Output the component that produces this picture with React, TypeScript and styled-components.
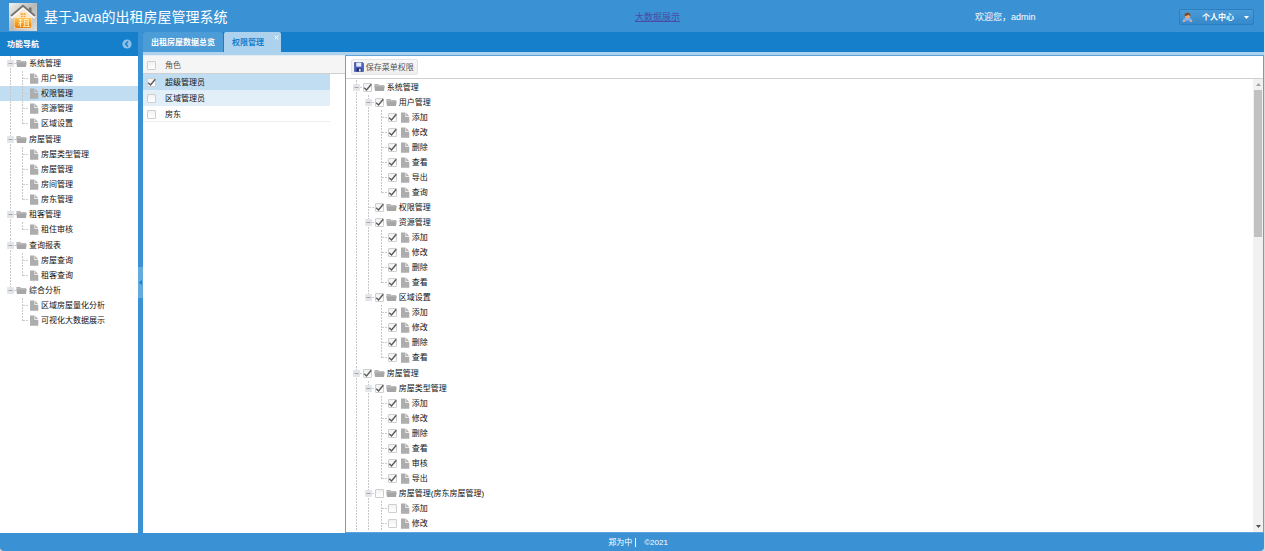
import React from 'react';
import styled, { createGlobalStyle, css } from 'styled-components';

const GlobalStyle = createGlobalStyle`
  * { box-sizing: border-box; }
  html, body { margin: 0; background: #ddd9d6; }
  body, button, input, table {
    font-family: "Liberation Sans", "Noto Sans CJK SC", sans-serif;
    font-size: 8px;
    line-height: 15px;
    color: #111;
  }
  a { color: inherit; text-decoration: none; }
`;

const Viewport = styled.div`
  display: flex;
  flex-direction: column;
  height: 100vh;
  margin-right: 1px;
  background: #3a92d4;
  border-radius: 0 0 4px 4px;
  overflow: hidden;
`;

const Header = styled.header`
  display: grid;
  grid-template-columns: 635fr 340fr 204fr auto;
  align-items: center;
  flex: 0 0 32px;
  padding: 2px 10px 0 0;
  color: #fff;
`;

const Brand = styled.div`
  display: flex;
  align-items: center;
  gap: 7px;
  padding-left: 9px;
  svg { flex: none; }
`;

const Title = styled.h1`
  margin: 0;
  font-size: 14px;
  font-weight: 400;
  line-height: 28px;
  white-space: nowrap;
`;

const BigDataLink = styled.a`
  font-size: 9px;
  color: #4a4aa8;
  text-decoration: underline;
`;

const Welcome = styled.span`
  font-size: 9px;
`;

const UserButton = styled.button`
  display: flex;
  align-items: center;
  width: 75px;
  height: 16px;
  padding: 0 4px 0 2px;
  border: 1px solid #2a7fc2;
  border-radius: 2px;
  background: linear-gradient(#4a9bd8, #3589ca);
  color: #fff;
  font-weight: 700;
  span { flex: 1; text-align: left; padding-left: 9px; }
`;

const Main = styled.div`
  display: flex;
  flex: 1;
  min-height: 0;
`;

const Sidebar = styled.aside`
  flex: 0 0 138px;
  display: flex;
  flex-direction: column;
  background: #fff;
`;

const SidebarHeader = styled.div`
  display: flex;
  align-items: center;
  justify-content: space-between;
  flex: 0 0 24px;
  padding: 0 6px 0 7px;
  background: #157fcc;
  color: #fff;
`;

const SidebarTitle = styled.h2`
  margin: 0;
  font-size: 8px;
`;

const BareButton = styled.button`
  display: grid;
  place-items: center;
  padding: 0;
  border: 0;
  background: none;
`;

const Splitter = styled.div`
  display: flex;
  align-items: center;
  flex: 0 0 5px;
`;

const SplitHandle = styled(BareButton)`
  width: 5px;
  height: 31px;
  background: #64abdf;
`;

const Workspace = styled.main`
  flex: 1;
  min-width: 0;
  display: flex;
  flex-direction: column;
  background: #157fcc;
`;

const TabStrip = styled.div`
  display: flex;
  gap: 1px;
  flex: 0 0 23px;
  border-bottom: 3px solid #add2ed;
`;

const Tab = styled.button<{ $active?: boolean }>`
  position: relative;
  padding: 0 ${p => (p.$active ? 17 : 8)}px 0 8px;
  border: 0;
  border-radius: 2px 2px 0 0;
  background: ${p => (p.$active ? '#add2ed' : '#4b9cd7')};
  color: ${p => (p.$active ? '#157fcc' : '#fff')};
  font-weight: 700;
`;

const TabClose = styled.span`
  position: absolute;
  top: 3px;
  right: 2px;
  display: flex;
`;

const Content = styled.div`
  display: flex;
  flex: 1;
  min-height: 0;
  background: #fff;
`;

const RolePane = styled.section`
  flex: 0 0 18%;
  border-top: 1px solid #e4edf4;
  background: linear-gradient(#f5f5f5 17px, #d0d0d0 17px, #d0d0d0 18px, #fff 18px);
`;

const RoleTable = styled.table`
  width: 187px;
  border-collapse: collapse;
  th, td {
    height: 16px;
    padding: 0;
    line-height: 15px;
    text-align: left;
    font-weight: 400;
    vertical-align: middle;
  }
  thead th { height: 18px; color: #555; }
  th:first-child, td:first-child { width: 22px; padding-left: 3px; }
`;

const RoleRow = styled.tr<{ $tone?: string }>`
  background: ${p => p.$tone ?? '#fff'};
  box-shadow: inset 0 -1px ${p => p.$tone ?? '#ededed'};
`;

const PermissionPane = styled.section`
  flex: 1;
  min-width: 0;
  display: flex;
  flex-direction: column;
  border: 1px solid #5fa2dd;
`;

const Toolbar = styled.div`
  display: flex;
  align-items: center;
  flex: 0 0 23px;
  padding: 0 5px;
  border-bottom: 1px solid #d0d0d0;
`;

const SaveButton = styled.button`
  display: flex;
  align-items: center;
  gap: 2px;
  height: 16px;
  padding: 0 3px 0 2px;
  border: 1px solid #e4e4e4;
  border-radius: 2px;
  background: linear-gradient(#f7f7f7, #efefef);
  color: #555;
`;

const ScrollArea = styled.div`
  display: flex;
  flex: 1;
  min-height: 0;
`;

const ScrollBody = styled.div`
  flex: 1;
  min-width: 0;
  padding-top: 1px;
  overflow: hidden;
`;

const ScrollTrack = styled.div`
  display: flex;
  flex-direction: column;
  flex: 0 0 10px;
  background: #f1f1f1;
`;

const ScrollArrow = styled(BareButton)`
  flex: 0 0 11px;
  width: 10px;
`;

const ScrollRun = styled.div`
  flex: 1;
  padding: 0 1px;
`;

const ScrollThumb = styled.div`
  height: 34%;
  background: #c1c1c1;
`;

const TreeList = styled.ul<{ $root?: boolean }>`
  margin: 0;
  padding: 0;
  list-style: none;
  ${p => p.$root && css`
    & > li:nth-child(even) { margin-top: 1px; }
  `}
`;

const rowStyle = css`
  display: flex;
  height: 15px;
  padding-left: 4px;
  white-space: nowrap;
`;

const NavRow = styled.a<{ $selected?: boolean }>`
  ${rowStyle}
  background: ${p => (p.$selected ? '#c1ddf1' : 'transparent')};
`;

const CheckRow = styled.label`
  ${rowStyle}
`;

const Cell = styled.span<{ $width: number }>`
  display: flex;
  align-items: center;
  flex: 0 0 ${p => p.$width}px;
`;

const CheckFrame = styled.span`
  display: grid;
  place-items: center;
  width: 11px;
  height: 11px;
  & > * { grid-area: 1 / 1; }
  svg { visibility: hidden; pointer-events: none; }
  input:checked + svg { visibility: visible; }
`;

const CheckInput = styled.input`
  appearance: none;
  width: 9px;
  height: 9px;
  margin: 0;
  border: 1px solid #cfcfcf;
  border-radius: 1px;
  background: linear-gradient(#f2f2f2, #fff);
`;

const Footer = styled.footer`
  flex: 0 0 18px;
  display: flex;
  justify-content: center;
  gap: 7px;
  padding: 2px 0 0 12px;
  color: #fff;
  span + span { border-left: 1px solid #fff; height: 9px; margin: 3px 0 0 -4px; line-height: 9px; padding-left: 8px; }
`;

const HouseLogo = () => (
  <svg width="28" height="28" viewBox="0 0 28 28" aria-hidden="true">
    <defs>
      <linearGradient id="plate" x1="0" y1="0" x2="1" y2="1">
        <stop offset="0" stopColor="#f2f2f0" /><stop offset=".5" stopColor="#b9bab8" /><stop offset="1" stopColor="#dededc" />
      </linearGradient>
      <linearGradient id="house" x1="0" y1="0" x2="0" y2="1">
        <stop offset="0" stopColor="#ffc95a" /><stop offset=".5" stopColor="#f9a01f" /><stop offset="1" stopColor="#ee7a08" />
      </linearGradient>
    </defs>
    <rect width="28" height="28" fill="url(#plate)" />
    <path d="M20 4.500h2.500v6H20z" fill="#77736e" />
    <path d="M5 14 14 6l9 8v9.500a2 2 0 0 1-2 2H7a2 2 0 0 1-2-2z" fill="#fbe9cc" />
    <path d="M5.500 15h17v8a2 2 0 0 1-2 2h-13a2 2 0 0 1-2-2z" fill="url(#house)" />
    <path d="M2 14.500 14 4l12 10.500" fill="none" stroke="#fff" strokeWidth="3" />
    <path d="M2 13 14 2.800 26 13" fill="none" stroke="#77736e" strokeWidth="1.800" />
    <path d="M11.700 10h2v2h-2zM14.500 10h2v2h-2zM11.700 12.700h2v1.500h-2zM14.500 12.700h2v1.500h-2z" fill="#f9a83a" />
    <path d="M9.500 17h4M11.500 16v8M9.500 19.500h4M11.300 19.500l-2 3M15.300 16.500h4v7M15.300 16.500v7M15.300 18.800h4M15.300 21h4M13.800 23.500h7" fill="none" stroke="#fff0c4" strokeWidth=".9" />
  </svg>
);

const UserIcon = () => (
  <svg width="11" height="11" viewBox="0 0 11 11" aria-hidden="true">
    <path d="M1 9.800V8q.5-2 3-2h3q2.500 0 3 2v1.800z" fill="#7db4f5" />
    <path d="M3.500 8.500h4v2h-4z" fill="#4d87dd" />
    <path d="M.8 8.300h2v1.700h-2zM8.200 8.300h2v1.700h-2z" fill="#eda676" />
    <circle cx="5.500" cy="4" r="2.600" fill="#eda676" />
    <path d="M2.600 4.200Q2.200.8 5.500.8t2.900 3.400Q7.200 3.600 6.400 2.800 4.700 4 2.600 4.200z" fill="#8a4517" />
  </svg>
);

const SaveIcon = () => (
  <svg width="10" height="10" viewBox="0 0 10 10" aria-hidden="true">
    <path d="M.5.5h8l1 1v8h-9z" fill="#4a62c4" stroke="#2f3f94" strokeWidth=".6" />
    <path d="M2.300.6h5v4h-5z" fill="#e9eefb" />
    <path d="M2.500 6h5v3.500h-5z" fill="#26326f" />
    <path d="M5 6.800h1.700v2.700H5z" fill="#dfe5f7" />
  </svg>
);

const Triangle = ({ d, color, w = 5, h = 3 }: { d: string; color: string; w?: number; h?: number }) => (
  <svg width={w} height={h} viewBox={`0 0 ${w} ${h}`} aria-hidden="true"><path d={d} fill={color} /></svg>
);

const FolderIcon = () => (
  <svg width="11" height="9" viewBox="0 0 11 9" aria-hidden="true">
    <path d="M.3 1h4l.8 1H10v2H.8z" fill="#b4b4b4" />
    <path d="M.3 3h10.400L10 8H1z" fill="#a6a6a6" />
    <path d="M.5 3h10" stroke="#cfcfcf" strokeWidth=".6" />
  </svg>
);

const FileIcon = () => (
  <svg width="11" height="11" viewBox="0 0 11 11" aria-hidden="true">
    <path d="M2 .5h4.500V5h3.800v5.700H2z" fill="#adadad" />
    <path d="M7.200.8 10.200 4.200H7.200z" fill="#adadad" />
  </svg>
);

type Joint = 'pass' | 'none' | 'tee' | 'end';

/* One column of the dotted guide lines, with the collapse box when the node is open. */
const Guide = ({ joint, open, width = 12 }: { joint: Joint; open?: boolean; width?: number }) => (
  <svg width={width} height="15" viewBox={`0 0 ${width} 15`} aria-hidden="true">
    {joint !== 'none' && (
      <path d={joint === 'end' ? 'M6.500 0v8' : 'M6.500 0v15'} stroke="#c8c8c8" strokeDasharray="2 1" fill="none" />
    )}
    {(joint === 'tee' || joint === 'end') && <path d="M7 7.500h5" stroke="#cdcdcd" strokeDasharray="2 1" fill="none" />}
    {open && (
      <>
        <rect x="3" y="4" width="7" height="7" rx="1" fill="#e2e5e9" />
        <path d="M4.500 7.500h4" stroke="#a3a7ab" />
      </>
    )}
  </svg>
);

type Node = { text: string; folder?: boolean; checked?: boolean; selected?: boolean; children?: Node[] };

type BranchProps = {
  nodes: Node[];
  checkable?: boolean;
  trail?: boolean[];
  clipped?: boolean;
};

const Check = ({ checked, label }: { checked?: boolean; label?: string }) => (
  <CheckFrame>
    <CheckInput type="checkbox" defaultChecked={checked} aria-label={label} />
    <svg width="11" height="11" viewBox="0 0 11 11" aria-hidden="true">
      <path d="M2.200 5.800 4.500 8 9.300 2.300" fill="none" stroke="#5a5a5a" strokeWidth="1.400" />
    </svg>
  </CheckFrame>
);

/* `clipped` marks a list that carries on below the visible area, so its last guide stays open. */
const Branch = ({ nodes, checkable, trail = [], clipped }: BranchProps) => (
  <TreeList $root={trail.length === 0}>
    {nodes.map((node, i) => {
      const atEnd = i === nodes.length - 1;
      const last = atEnd && !clipped;
      const row = (
        <>
          {trail.map((line, depth) => (
            <Cell key={depth} $width={depth === 0 ? 12 : 13}>
              <Guide joint={line ? 'pass' : 'none'} />
            </Cell>
          ))}
          <Cell $width={12}><Guide joint={last ? 'end' : 'tee'} open={!!node.children} /></Cell>
          {checkable && <Cell $width={12}><Check checked={node.checked} /></Cell>}
          <Cell $width={13}>{node.folder || node.children ? <FolderIcon /> : <FileIcon />}</Cell>
          <span>{node.text}</span>
        </>
      );
      return (
        <li key={i}>
          {checkable ? <CheckRow>{row}</CheckRow> : <NavRow href="#" $selected={node.selected}>{row}</NavRow>}
          {node.children && (
            <Branch nodes={node.children} checkable={checkable} trail={[...trail, !last]} clipped={clipped && atEnd} />
          )}
        </li>
      );
    })}
  </TreeList>
);

const group = (text: string, items: string[], selected?: string): Node => ({
  text,
  children: items.map(t => ({ text: t, selected: t === selected })),
});

const granted = (text: string, items: string[], checked = true): Node => ({
  text,
  checked,
  children: items.map(t => ({ text: t, checked })),
});

const navigation: Node[] = [
  group('系统管理', ['用户管理', '权限管理', '资源管理', '区域设置'], '权限管理'),
  group('房屋管理', ['房屋类型管理', '房屋管理', '房间管理', '房东管理']),
  group('租客管理', ['租住审核']),
  group('查询报表', ['房屋查询', '租客查询']),
  group('综合分析', ['区域房屋量化分析', '可视化大数据展示']),
];

const permissions: Node[] = [
  {
    text: '系统管理',
    checked: true,
    children: [
      granted('用户管理', ['添加', '修改', '删除', '查看', '导出', '查询']),
      { text: '权限管理', checked: true, folder: true },
      granted('资源管理', ['添加', '修改', '删除', '查看']),
      granted('区域设置', ['添加', '修改', '删除', '查看']),
    ],
  },
  {
    text: '房屋管理',
    checked: true,
    children: [
      granted('房屋类型管理', ['添加', '修改', '删除', '查看', '审核', '导出']),
      granted('房屋管理(房东房屋管理)', ['添加', '修改'], false),
    ],
  },
];

const roles = [
  { name: '超级管理员', checked: true, tone: '#c1ddf1' },
  { name: '区域管理员', tone: '#e2eff8' },
  { name: '房东' },
];

export default function App() {
  return (
    <>
      <GlobalStyle />
      <Viewport>
        <Header>
          <Brand>
            <HouseLogo />
            <Title>基于Java的出租房屋管理系统</Title>
          </Brand>
          <div><BigDataLink href="#">大数据展示</BigDataLink></div>
          <Welcome>欢迎您，admin</Welcome>
          <UserButton type="button">
            <UserIcon />
            <span>个人中心</span>
            <Triangle d="M0 0h5L2.500 3z" color="#fff" />
          </UserButton>
        </Header>

        <Main>
          <Sidebar>
            <SidebarHeader>
              <SidebarTitle>功能导航</SidebarTitle>
              <BareButton type="button" aria-label="折叠">
                <svg width="10" height="10" viewBox="0 0 10 10" aria-hidden="true">
                  <circle cx="5" cy="5" r="4.600" fill="#8fc1e6" />
                  <path d="M6 2.500 3.600 5 6 7.500" fill="none" stroke="#157fcc" strokeWidth="1.500" />
                </svg>
              </BareButton>
            </SidebarHeader>
            <nav><Branch nodes={navigation} /></nav>
          </Sidebar>

          <Splitter>
            <SplitHandle type="button" aria-label="折叠导航">
              <Triangle d="M3 0v5L0 2.500z" color="#157fcc" w={3} h={5} />
            </SplitHandle>
          </Splitter>

          <Workspace>
            <TabStrip>
              <Tab type="button">出租房屋数据总览</Tab>
              <Tab type="button" $active>
                权限管理
                <TabClose>
                  <svg width="5" height="5" viewBox="0 0 5 5" aria-hidden="true">
                    <path d="M.7.7l3.600 3.600M4.300.7.7 4.300" stroke="#fff" />
                  </svg>
                </TabClose>
              </Tab>
            </TabStrip>
            <Content>
              <RolePane>
                <RoleTable>
                  <thead>
                    <tr>
                      <th><Check label="全选" /></th>
                      <th>角色</th>
                    </tr>
                  </thead>
                  <tbody>
                    {roles.map(role => (
                      <RoleRow key={role.name} $tone={role.tone}>
                        <td><Check checked={role.checked} label={role.name} /></td>
                        <td>{role.name}</td>
                      </RoleRow>
                    ))}
                  </tbody>
                </RoleTable>
              </RolePane>
              <PermissionPane>
                <Toolbar>
                  <SaveButton type="button"><SaveIcon />保存菜单权限</SaveButton>
                </Toolbar>
                <ScrollArea>
                  <ScrollBody><Branch nodes={permissions} checkable clipped /></ScrollBody>
                  <ScrollTrack>
                    <ScrollArrow type="button" aria-label="向上滚动">
                      <Triangle d="M0 3h5L2.500 0z" color="#a3a3a3" />
                    </ScrollArrow>
                    <ScrollRun><ScrollThumb /></ScrollRun>
                    <ScrollArrow type="button" aria-label="向下滚动">
                      <Triangle d="M0 0h5L2.500 3z" color="#505050" />
                    </ScrollArrow>
                  </ScrollTrack>
                </ScrollArea>
              </PermissionPane>
            </Content>
          </Workspace>
        </Main>

        <Footer>
          <span>郑为中</span>
          <span>©2021</span>
        </Footer>
      </Viewport>
    </>
  );
}
